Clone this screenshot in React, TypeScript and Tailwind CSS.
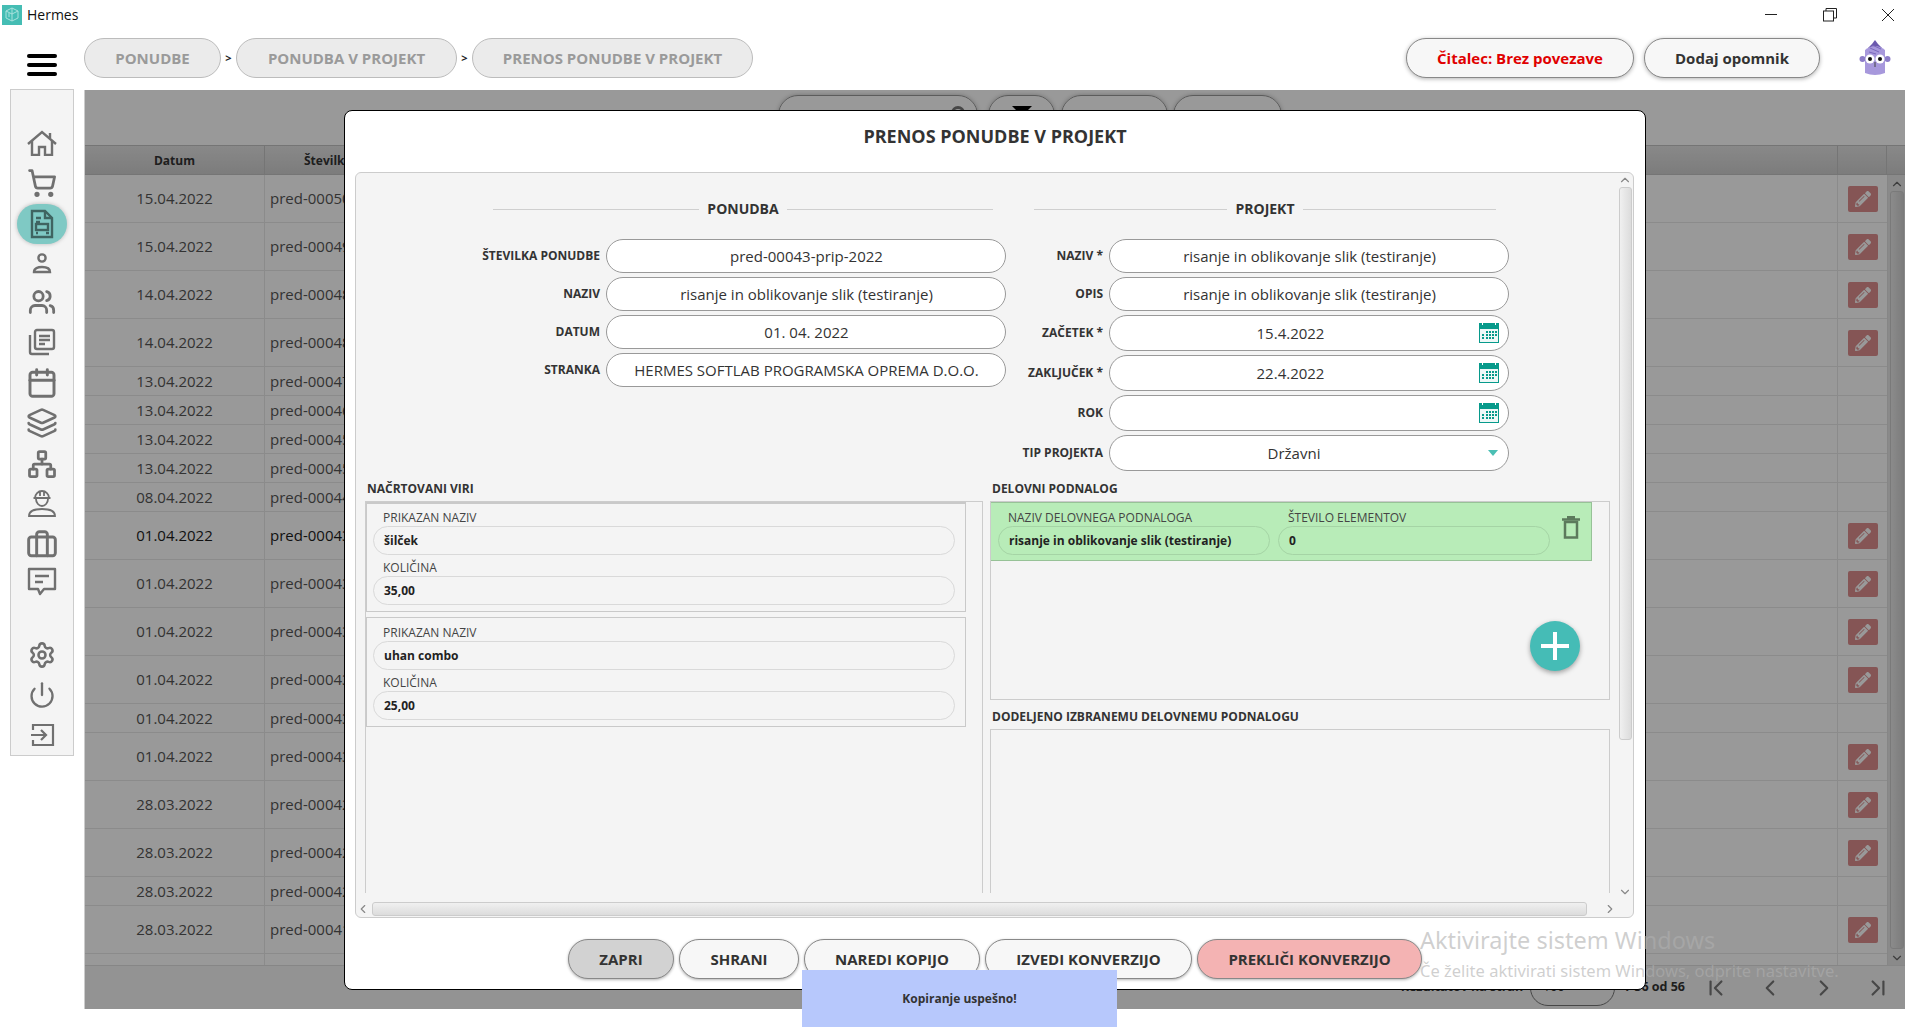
import { Briefcase, Calendar, ChevronDown, ChevronFirst, ChevronLast, ChevronLeft, ChevronRight, ChevronUp, Layers, Network, Power, Settings, ShoppingCart, Users } from "lucide-react";
import { FaPencilAlt } from "react-icons/fa";

const rows = [
  ["15.04.2022", "pred-00050", 1], ["15.04.2022", "pred-00049", 1], ["14.04.2022", "pred-00048", 1], ["14.04.2022", "pred-00048", 1],
  ["13.04.2022", "pred-00047", 0], ["13.04.2022", "pred-00046", 0], ["13.04.2022", "pred-00045", 0], ["13.04.2022", "pred-00045", 0], ["08.04.2022", "pred-00044", 0],
  ["01.04.2022", "pred-00043", 2], ["01.04.2022", "pred-00043", 1], ["01.04.2022", "pred-00043", 1], ["01.04.2022", "pred-00043", 1], ["01.04.2022", "pred-00043", 0], ["01.04.2022", "pred-00043", 1],
  ["28.03.2022", "pred-00042", 1], ["28.03.2022", "pred-00042", 1], ["28.03.2022", "pred-00042", 0], ["28.03.2022", "pred-00041", 1], ["28.03.2022", "pred-00041", 1],
] as const;

function HomeIcon() {
  return (
    <svg width="30" height="26" viewBox="0 0 30 26" fill="none" stroke="#707070" strokeWidth="2.4">
      <path d="M1 14L15 2l14 12" />
      <path d="M5 11v14h7v-8h6v8h7V11M23 3v5" />
    </svg>
  );
}

function ChatIcon() {
  return (
    <svg width="30" height="30" viewBox="0 0 30 30" fill="none" stroke="#707070" strokeWidth="2.4">
      <path d="M2 2h26v20H17l-4 5-2-5H2z" strokeLinejoin="round" />
      <path d="M8 9h14M8 15h8" />
    </svg>
  );
}

function Person() {
  return (
    <svg width="28" height="26" viewBox="0 0 28 26" fill="none" stroke="#707070" strokeWidth="2.4">
      <circle cx="14" cy="7" r="3.6" />
      <path d="M6 21c0-4 4-5 8-5s8 1 8 5z" />
    </svg>
  );
}

function DocIcon() {
  return (
    <svg width="24" height="30" viewBox="0 0 24 30" fill="none" stroke="#3f6461" strokeWidth="2.4">
      <path d="M2 2h13l7 7v19H2z" />
      <path d="M15 2v7h7M6 9h5M6 13h4M6 24h2M16 24h3" />
      <rect x="6" y="15" width="12" height="6" />
    </svg>
  );
}

function StackDocs() {
  return (
    <svg width="28" height="28" viewBox="0 0 28 28" fill="none" stroke="#707070" strokeWidth="2.4">
      <rect x="7" y="2" width="19" height="19" rx="2" />
      <path d="M2 7v17a2 2 0 0 0 2 2h17M11 8h11M11 12h11M11 16h6" />
    </svg>
  );
}

function Worker() {
  return (
    <svg width="30" height="32" viewBox="0 0 30 32" fill="none" stroke="#707070" strokeWidth="1.8">
      <path d="M8 12a7 7 0 0 1 14 0zM6.500 12h17M13 5v5M17 5v5" />
      <path d="M9 13c0 4 3 7 6 7s6-3 6-7" />
      <path d="M2 30c0-6 7-7 13-7s13 1 13 7z" />
    </svg>
  );
}

function ExitIcon() {
  return (
    <svg width="26" height="24" viewBox="0 0 26 24" fill="none" stroke="#707070" strokeWidth="2.2">
      <path d="M4 7V2h20v20H4v-5M2 12h15M12 7l5 5-5 5" />
    </svg>
  );
}

function CalendarIcon() {
  return (
    <svg width="20" height="20" viewBox="0 0 20 20" className="shrink-0">
      <rect x="0" y="0" width="20" height="20" fill="#079a8b" />
      <rect x="1" y="6" width="18" height="13" fill="#eef8f7" />
      <rect x="3" y="0" width="1" height="2" fill="#fff" />
      <rect x="16" y="0" width="1" height="2" fill="#fff" />
      <path d="M7 8h2v2H7zM10 8h2v2h-2zM13 8h2v2h-2zM16 8h2v2h-2zM3 11h2v2H3zM7 11h2v2H7zM10 11h2v2h-2zM13 11h2v2h-2zM16 11h2v2h-2zM3 14h2v2H3zM7 14h2v2H7zM10 14h2v2h-2zM13 14h2v2h-2z" fill="#079a8b" />
    </svg>
  );
}

function Avatar() {
  return (
    <svg width="34" height="38" viewBox="0 0 34 38">
      <path d="M14 5l3-4 3 4 4 4H10z" fill="#6a58ad" />
      <path d="M7 11q10-8 20 0v23q-10 4-20 0z" fill="#a798dc" />
      <path d="M12 9l9 4M14 6l9 4M11 13l7 2" stroke="#7a69bb" strokeWidth="1" />
      <circle cx="4.500" cy="20" r="3" fill="#8d7dc9" />
      <circle cx="29.500" cy="20" r="3" fill="#8d7dc9" />
      <circle cx="12" cy="20" r="4.500" fill="#fff" />
      <circle cx="22" cy="20" r="4.500" fill="#fff" />
      <circle cx="12" cy="20" r="2" fill="#111" />
      <circle cx="22" cy="20" r="2" fill="#111" />
      <path d="M17 23v5" stroke="#444" strokeWidth="1" />
    </svg>
  );
}

function Logo() {
  return (
    <div className="w-[20px] h-[20px] bg-[#45bdb4] flex items-center justify-center">
      <svg width="14" height="15" viewBox="0 0 14 15" fill="none" stroke="#a9e2dd" strokeWidth="1">
        <path d="M7 1l6 3v7l-6 3-6-3V4zM7 1v13M1 4l6 3 6-3M4 6v4" />
      </svg>
    </div>
  );
}

function Crumb({ text, w }: { text: string; w: string }) {
  return <div className={`${w} h-[40px] rounded-full bg-[#ebebeb] border border-[#bcbcbc] flex items-center justify-center text-[15px] font-bold text-[#9a9a9a]`}>{text}</div>;
}

function TopButton({ text, w, color }: { text: string; w: string; color: string }) {
  return <div className={`${w} ${color} h-[40px] rounded-full bg-[#f7f7f7] border border-[#888] shadow-[0_1px_4px_rgba(0,0,0,0.3)] flex items-center justify-center text-[15px] font-bold`}>{text}</div>;
}

function Section({ title, w, ml }: { title: string; w: string; ml: string }) {
  return (
    <div className={`${w} ${ml} h-[20px] flex items-center gap-[8px] mb-[20px]`}>
      <div className="flex-1 h-px bg-[#cfcfcf]" />
      <span className="text-[14px] font-bold text-[#333] pb-[2px]">{title}</span>
      <div className="flex-1 h-px bg-[#cfcfcf]" />
    </div>
  );
}

function Field({ label, value, lw, h, cal, arrow, pr }: { label: string; value: string; lw: string; h: string; cal?: boolean; arrow?: boolean; pr?: string }) {
  return (
    <div className="flex items-center gap-[6px]">
      <div className={`${lw} text-right text-[12px] font-bold text-[#333] whitespace-nowrap`}>{label}</div>
      <div className={`${h} w-[400px] rounded-full bg-white border border-[#999] flex items-center pl-[10px] pr-[9px]`}>
        <div className={`flex-1 text-center text-[15px] text-[#333] whitespace-nowrap ${pr ?? ""}`}>{value}</div>
        {cal && <CalendarIcon />}
        {arrow && <div className="w-0 h-0 mr-px border-x-[5px] border-x-transparent border-t-[6px] border-t-[#4bbfb4]" />}
      </div>
    </div>
  );
}

function SmallField({ label, value, w, bd, px }: { label: string; value: string; w: string; bd: string; px: string }) {
  return (
    <div className={w}>
      <div className={`${px} h-[16px] leading-[16px] text-[12px] text-[#444] whitespace-nowrap`}>{label}</div>
      <div className={`${bd} h-[29px] rounded-full border flex items-center px-[10px] text-[12px] font-bold text-[#222] whitespace-nowrap`}>{value}</div>
    </div>
  );
}

function Resource({ name, qty, first }: { name: string; qty: string; first?: boolean }) {
  return (
    <div className={`w-[600px] h-[110px] border border-[#c9c9c9] px-[6px] ${first ? "border-t-2 pt-[6px]" : "mt-[5px] pt-[7px]"}`}>
      <SmallField label="PRIKAZAN NAZIV" value={name} w="w-[582px]" bd="border-[#d9d9d9]" px="pl-[10px]" />
      <div className="h-[5px]" />
      <SmallField label="KOLIČINA" value={qty} w="w-[582px]" bd="border-[#d9d9d9]" px="pl-[10px]" />
    </div>
  );
}

function ModalButton({ text, w, bg }: { text: string; w: string; bg: string }) {
  return <div className={`${w} ${bg} h-[40px] rounded-full border border-[#888] shadow-[0_1px_3px_rgba(0,0,0,0.3)] flex items-center justify-center text-[15px] font-bold text-[#333] whitespace-nowrap`}>{text}</div>;
}

export default function App() {
  return (
    <div className="relative w-[1920px] h-[1027px] overflow-hidden bg-white font-['Open_Sans',sans-serif]">
      {/* window title */}
      <div className="h-[33px] flex items-center pl-[2px] pb-[4px]">
        <Logo />
        <span className="ml-[5px] text-[14px] text-[#111]">Hermes</span>
        <div className="ml-auto flex items-center h-full">
          <div className="w-[12px] h-px bg-[#222] mr-[46px]" />
          <svg width="14" height="14" viewBox="0 0 14 14" fill="none" stroke="#222" className="mr-[45px]"><rect x="0.500" y="3" width="10" height="10" /><path d="M3 3V0.500h10.500V10H11" /></svg>
          <svg width="12" height="12" viewBox="0 0 12 12" stroke="#222" className="mr-[26px]"><path d="M0 0l12 12M12 0L0 12" /></svg>
        </div>
      </div>

      {/* top bar */}
      <div className="h-[56px] flex items-start pt-[5px]">
        <div className="w-[30px] ml-[27px] mt-[16px] flex flex-col gap-[5px]">
          <div className="h-[4px] rounded-full bg-black" />
          <div className="h-[4px] rounded-full bg-black" />
          <div className="h-[4px] rounded-full bg-black" />
        </div>
        <div className="ml-[27px] flex items-center h-[40px]">
          <Crumb text="PONUDBE" w="w-[137px]" />
          <span className="w-[15px] text-center text-[11px] font-bold text-[#222]">&gt;</span>
          <Crumb text="PONUDBA V PROJEKT" w="w-[221px]" />
          <span className="w-[15px] text-center text-[11px] font-bold text-[#222]">&gt;</span>
          <Crumb text="PRENOS PONUDBE V PROJEKT" w="w-[281px]" />
        </div>
        <div className="ml-auto flex items-center h-[40px]">
          <TopButton text="Čitalec: Brez povezave" w="w-[228px]" color="text-[#e00000]" />
          <div className="w-[10px]" />
          <TopButton text="Dodaj opomnik" w="w-[176px]" color="text-[#333]" />
          <div className="ml-[38px] mr-[28px]"><Avatar /></div>
        </div>
      </div>

      <div className="flex items-start">
        {/* sidebar */}
        <div className="ml-[10px] w-[64px] h-[667px] bg-[#f4f4f4] border border-[#ccc] pt-[33px] flex flex-col items-center text-[#707070]">
          <div className="h-[40px] flex items-center"><HomeIcon /></div>
          <div className="h-[40px] flex items-center"><ShoppingCart size={30} strokeWidth={2.2} /></div>
          <div className="h-[42px] w-[50px] flex items-center justify-center"><div className="w-[50px] h-[40px] shrink-0 rounded-full bg-[#7fc9c4] shadow-[0_0_4px_rgba(0,0,0,0.25)] flex items-center justify-center"><DocIcon /></div></div>
          <div className="h-[38px] flex items-center"><Person /></div>
          <div className="h-[40px] flex items-center"><Users size={28} strokeWidth={2.4} /></div>
          <div className="h-[40px] flex items-center"><StackDocs /></div>
          <div className="h-[41px] flex items-center"><Calendar size={32} strokeWidth={2.2} /></div>
          <div className="h-[41px] flex items-center"><Layers size={32} strokeWidth={2} /></div>
          <div className="h-[41px] flex items-center"><Network size={30} strokeWidth={2.2} /></div>
          <div className="h-[34px] flex items-center"><Worker /></div>
          <div className="h-[52px] flex items-center"><Briefcase size={32} strokeWidth={2.2} /></div>
          <div className="h-[23px] flex items-center"><ChatIcon /></div>
          <div className="h-[40px] mt-[42px] flex items-center"><Settings size={28} strokeWidth={2.2} /></div>
          <div className="h-[40px] flex items-center"><Power size={28} strokeWidth={2} /></div>
          <div className="h-[40px] flex items-center"><ExitIcon /></div>
        </div>

        {/* page under the dialog */}
        <div className="relative ml-[10px] w-[1821px] h-[919px] mt-px bg-white border-l border-[#ccc] overflow-hidden">
          <div className="h-[55px] pt-[5px] flex items-start">
            <div className="ml-[693px] w-[200px] h-[40px] rounded-[20px] border border-[#999] shadow-[0_0_4px_rgba(0,0,0,0.25)] flex justify-end pt-[10px] pr-[12px]">
              <div className="w-[14px] h-[14px] rounded-full border-[3px] border-[#777]" />
            </div>
            <div className="ml-[10px] w-[67px] h-[40px] rounded-[20px] border border-[#999] shadow-[0_0_4px_rgba(0,0,0,0.25)] flex justify-center pt-[10px]">
              <div className="w-0 h-0 border-x-[10px] border-x-transparent border-t-[10px] border-t-black" />
            </div>
            <div className="ml-[6px] w-[107px] h-[40px] rounded-[20px] border border-[#999] shadow-[0_0_4px_rgba(0,0,0,0.25)]" />
            <div className="ml-[5px] w-[109px] h-[40px] rounded-[20px] border border-[#999] shadow-[0_0_4px_rgba(0,0,0,0.25)]" />
          </div>
          <div className="h-[820px] flex flex-col overflow-hidden">
            <div className="h-[30px] shrink-0 flex bg-gradient-to-b from-[#e4e4e4] to-[#cfcfcf] border-y border-[#c4c4c4] text-[12px] font-bold text-[#333]">
              <div className="w-[180px] pt-px flex items-center justify-center border-r border-[#c4c4c4]">Datum</div>
              <div className="flex-1 pt-px flex items-center pl-[39px]">Številka</div>
              <div className="w-[50px] border-x border-[#c4c4c4]" />
              <div className="w-[18px]" />
            </div>
            <div className="flex-1 flex min-h-0">
              <div className="flex-1 min-w-0">
                {rows.map((r, i) => (
                  <div key={i} className={`${r[2] ? "h-[48px]" : "h-[29px]"} flex items-center border-b border-[#e8e8e8] text-[15px] ${r[2] === 2 ? "text-[#1c1c1c]" : "text-[#555]"}`}>
                    <div className="w-[180px] h-full flex items-center justify-center border-r border-[#e8e8e8]">{r[0]}</div>
                    <div className="flex-1 pl-[5px]">{r[1]}</div>
                    <div className="w-[50px] h-full border-l border-[#e8e8e8] flex items-center justify-center">
                      {r[2] !== 0 && (
                        <div className="w-[30px] h-[26px] rounded-[2px] bg-[#de8e8e] flex items-center justify-center text-white"><FaPencilAlt size={16} /></div>
                      )}
                    </div>
                  </div>
                ))}
              </div>
              <div className="w-[18px] bg-[#e6e6e6] border-l border-[#e0e0e0] flex flex-col items-center text-[#666]">
                <ChevronUp size={14} className="mt-[2px] shrink-0" />
                <div className="flex-1 w-[14px] mb-[2px] rounded-[3px] border border-[#ccc] bg-gradient-to-r from-[#e8e8e8] to-[#d0d0d0]" />
                <ChevronDown size={14} className="shrink-0" />
              </div>
            </div>
          </div>
          <div className="h-[44px] bg-[#f5f5f5] border-t border-[#e0e0e0] flex items-center justify-end text-[12.500px] font-bold text-[#333]">
            <span>Rezultatov na stran</span>
            <div className="ml-[7px] w-[85px] h-[36px] rounded-full border border-[#777] flex items-center pl-[12px] font-normal">100</div>
            <span className="ml-[8px] mr-[4px]">1-56 od 56</span>
            <div className="w-[54px] flex justify-center text-[#777]"><ChevronFirst size={26} /></div>
            <div className="w-[54px] flex justify-center text-[#777]"><ChevronLeft size={26} /></div>
            <div className="w-[54px] flex justify-center text-[#777]"><ChevronRight size={26} /></div>
            <div className="w-[54px] flex justify-center text-[#777]"><ChevronLast size={26} /></div>
          </div>
          <div className="absolute inset-0 bg-black/40" />
        </div>
      </div>

      {/* dialog */}
      <div className="absolute left-[344px] top-[110px] w-[1302px] h-[880px] bg-white border border-black rounded-[8px] flex flex-col">
        <div className="h-[61px] shrink-0 flex items-center justify-center pb-[10px] text-[18px] font-bold text-[#333]">PRENOS PONUDBE V PROJEKT</div>
        <div className="ml-[10px] w-[1279px] h-[746px] shrink-0 bg-[#f4f4f4] border border-[#ccc] rounded-[6px] flex overflow-hidden">
          <div className="flex-1 min-w-0 flex flex-col">
            <div className="flex-1 min-h-0 flex flex-col">
              {/* form */}
              <div className="flex pt-[26px]">
                <div className="ml-[114px] w-[536px]">
                  <Section title="PONUDBA" w="w-[500px]" ml="ml-[23px]" />
                  <div className="flex flex-col gap-[4px]">
                    <Field label="ŠTEVILKA PONUDBE" value="pred-00043-prip-2022" lw="w-[130px]" h="h-[34px]" />
                    <Field label="NAZIV" value="risanje in oblikovanje slik (testiranje)" lw="w-[130px]" h="h-[34px]" />
                    <Field label="DATUM" value="01. 04. 2022" lw="w-[130px]" h="h-[34px]" />
                    <Field label="STRANKA" value="HERMES SOFTLAB PROGRAMSKA OPREMA D.O.O." lw="w-[130px]" h="h-[34px]" />
                  </div>
                </div>
                <div className="ml-[7px] w-[496px]">
                  <Section title="PROJEKT" w="w-[462px]" ml="ml-[21px]" />
                  <div className="flex flex-col gap-[4px]">
                    <Field label="NAZIV *" value="risanje in oblikovanje slik (testiranje)" lw="w-[90px]" h="h-[34px]" />
                    <Field label="OPIS" value="risanje in oblikovanje slik (testiranje)" lw="w-[90px]" h="h-[34px]" />
                    <Field label="ZAČETEK *" value="15.4.2022" lw="w-[90px]" h="h-[36px]" cal pr="pr-[18px]" />
                    <Field label="ZAKLJUČEK *" value="22.4.2022" lw="w-[90px]" h="h-[36px]" cal pr="pr-[18px]" />
                    <Field label="ROK" value="" lw="w-[90px]" h="h-[36px]" cal />
                    <Field label="TIP PROJEKTA" value="Državni" lw="w-[90px]" h="h-[36px]" arrow pr="pr-[20px]" />
                  </div>
                </div>
              </div>

              {/* lists */}
              <div className="flex-1 min-h-0 flex pl-[9px] gap-[7px] pb-[8px]">
                <div className="w-[618px] flex flex-col">
                  <div className="h-[18px] mt-[9px] mb-[3px] leading-[18px] pl-[2px] text-[12px] font-bold text-[#333]">NAČRTOVANI VIRI</div>
                  <div className="flex-1 border-x border-t border-[#ccc]">
                    <Resource name="šilček" qty="35,00" first />
                    <Resource name="uhan combo" qty="25,00" />
                  </div>
                </div>
                <div className="w-[620px] flex flex-col">
                  <div className="h-[18px] mt-[9px] mb-[3px] leading-[18px] pl-[2px] text-[12px] font-bold text-[#333]">DELOVNI PODNALOG</div>
                  <div className="relative h-[199px] shrink-0 border border-[#ccc]">
                    <div className="w-[601px] h-[59px] bg-[#b8ecb8] border-y border-r border-[#97c297] flex pl-[7px] pt-[7px]">
                      <SmallField label="NAZIV DELOVNEGA PODNALOGA" value="risanje in oblikovanje slik (testiranje)" w="w-[272px]" bd="border-[#a5d4a5]" px="pl-[10px]" />
                      <div className="w-[8px]" />
                      <SmallField label="ŠTEVILO ELEMENTOV" value="0" w="w-[272px]" bd="border-[#a5d4a5]" px="pl-[10px]" />
                      <svg width="18" height="23" viewBox="0 0 18 23" fill="none" stroke="#5c7a5c" strokeWidth="2.5" className="ml-[12px] mt-[6px]">
                        <path d="M0 3.500h18M5 1h8" />
                        <rect x="3" y="6" width="12" height="15.500" />
                      </svg>
                    </div>
                    <div className="absolute right-[29px] top-[119px] w-[50px] h-[50px] rounded-full bg-[#45bcb6] shadow-[0_2px_5px_rgba(0,0,0,0.35)] flex items-center justify-center">
                      <div className="relative w-[28px] h-[28px]">
                        <div className="absolute left-0 right-0 top-[12px] h-[4px] bg-white" />
                        <div className="absolute top-0 bottom-0 left-[12px] w-[4px] bg-white" />
                      </div>
                    </div>
                  </div>
                  <div className="h-[18px] mt-[8px] mb-[3px] leading-[18px] pl-[2px] text-[12px] font-bold text-[#333]">DODELJENO IZBRANEMU DELOVNEMU PODNALOGU</div>
                  <div className="flex-1 border-x border-t border-[#ccc]" />
                </div>
              </div>
            </div>
            {/* horizontal scrollbar */}
            <div className="h-[16px] shrink-0 flex items-center text-[#888]">
              <ChevronLeft size={14} className="shrink-0" />
              <div className="ml-[2px] w-[1227px] h-[14px] rounded-[3px] border border-[#ccc] bg-gradient-to-b from-[#f0f0f0] to-[#dcdcdc]" />
              <ChevronRight size={14} className="ml-[16px] shrink-0" />
            </div>
          </div>
          {/* vertical scrollbar */}
          <div className="w-[16px] shrink-0 flex flex-col items-center text-[#888]">
            <ChevronUp size={14} className="shrink-0" />
            <div className="w-[13px] h-[553px] rounded-[3px] border border-[#ccc] bg-gradient-to-r from-[#f0f0f0] to-[#dcdcdc]" />
            <ChevronDown size={14} className="mt-auto mb-[18px] shrink-0" />
          </div>
        </div>
        <div className="flex pl-[223px] pt-[21px] text-[#333]">
          <ModalButton text="ZAPRI" w="w-[106px]" bg="bg-[#d2d2d2]" />
          <div className="w-[5px]" />
          <ModalButton text="SHRANI" w="w-[120px]" bg="bg-[#f7f7f7]" />
          <div className="w-[5px]" />
          <ModalButton text="NAREDI KOPIJO" w="w-[176px]" bg="bg-[#f7f7f7]" />
          <div className="w-[5px]" />
          <ModalButton text="IZVEDI KONVERZIJO" w="w-[207px]" bg="bg-[#f7f7f7]" />
          <div className="w-[5px]" />
          <ModalButton text="PREKLIČI KONVERZIJO" w="w-[225px]" bg="bg-[#f4b3b3]" />
        </div>
      </div>

      {/* toast */}
      <div className="absolute left-[802px] top-[970px] w-[315px] h-[57px] bg-[#b7c8fc] flex items-center justify-center text-[12px] font-bold text-[#333]">Kopiranje uspešno!</div>

      {/* windows watermark */}
      <div className="absolute left-[1420px] top-[923px] pointer-events-none text-[rgba(175,175,175,0.6)] font-['Noto_Sans',sans-serif]">
        <div className="text-[23.500px] leading-[34px]">Aktivirajte sistem Windows</div>
        <div className="text-[16.500px] leading-[24px] mt-[2px]">Če želite aktivirati sistem Windows, odprite nastavitve.</div>
      </div>
    </div>
  );
}
